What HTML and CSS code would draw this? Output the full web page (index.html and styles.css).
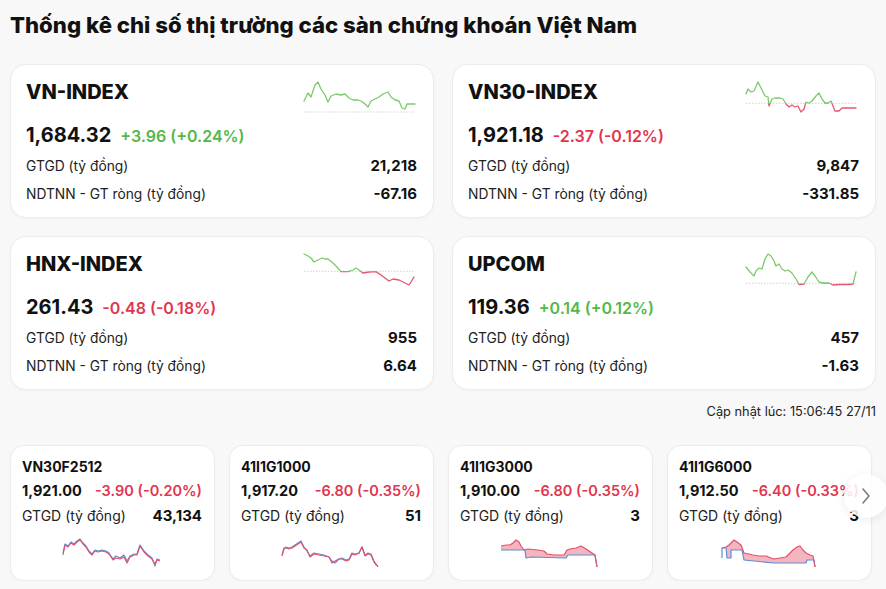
FILE: index.html
```html
<!DOCTYPE html>
<html lang="vi">
<head>
<meta charset="utf-8">
<title>Thống kê chỉ số thị trường</title>
<link rel="stylesheet" href="styles.css">
</head>
<body>
<main class="page">
  <h1 class="title">Thống kê chỉ số thị trường các sàn chứng khoán Việt Nam</h1>

  <section class="index-grid">
    <article class="icard">
      <div class="icard-head">
        <h2 class="iname">VN-INDEX</h2>
        <svg class="spark" viewBox="0 0 115 40" width="115" height="40">
          <line class="base" x1="1" y1="36" x2="112" y2="36"/>
          <polyline class="ln-up" points="1,25 5,17 8,21 12,9 15,6 18,13 22,19 25,26 28,20 33,18 38,19 42,18 46,22 50,24 55,24 58,25 62,28 65,31 68,25 72,23 76,21 80,18 85,16 88,21 92,24 96,25 99,32 102,33 104,28 108,28 112,28"/>
        </svg>
      </div>
      <div class="iprice"><span class="pval">1,684.32</span><span class="chg up">+3.96 (+0.24%)</span></div>
      <div class="stat"><span>GTGD (tỷ đồng)</span><b>21,218</b></div>
      <div class="stat stat2"><span>NDTNN - GT ròng (tỷ đồng)</span><b>-67.16</b></div>
    </article>

    <article class="icard">
      <div class="icard-head">
        <h2 class="iname">VN30-INDEX</h2>
        <svg class="spark" viewBox="0 0 115 40" width="115" height="40">
          <defs>
            <clipPath id="vn30a"><rect x="0" y="0" width="115" height="27.3"/></clipPath>
            <clipPath id="vn30b"><rect x="0" y="27.3" width="115" height="13"/></clipPath>
          </defs>
          <line class="base base-mid" x1="1" y1="27.3" x2="112" y2="27.3"/>
          <polyline class="ln-up" clip-path="url(#vn30a)" points="1,18 3,13 6,16 9,15 13,6 17,14 20,20 23,21 24,30 27,23 30,22 35,22 38,23 41,28 44,31 47,29 50,31 53,30 56,36 59,33 61,26 64,27 67,25 71,20 74,17 77,23 80,27 83,27 86,25 88,30 90,35 94,35 97,32 100,32 104,32 111,32"/>
          <polyline class="ln-down" clip-path="url(#vn30b)" points="1,18 3,13 6,16 9,15 13,6 17,14 20,20 23,21 24,30 27,23 30,22 35,22 38,23 41,28 44,31 47,29 50,31 53,30 56,36 59,33 61,26 64,27 67,25 71,20 74,17 77,23 80,27 83,27 86,25 88,30 90,35 94,35 97,32 100,32 104,32 111,32"/>
        </svg>
      </div>
      <div class="iprice"><span class="pval">1,921.18</span><span class="chg down">-2.37 (-0.12%)</span></div>
      <div class="stat"><span>GTGD (tỷ đồng)</span><b>9,847</b></div>
      <div class="stat stat2"><span>NDTNN - GT ròng (tỷ đồng)</span><b>-331.85</b></div>
    </article>

    <article class="icard">
      <div class="icard-head">
        <h2 class="iname">HNX-INDEX</h2>
        <svg class="spark" viewBox="0 0 115 40" width="115" height="40">
          <defs>
            <clipPath id="hnxa"><rect x="0" y="0" width="115" height="23.3"/></clipPath>
            <clipPath id="hnxb"><rect x="0" y="23.3" width="115" height="17"/></clipPath>
          </defs>
          <line class="base base-mid" x1="1" y1="23.3" x2="112" y2="23.3"/>
          <polyline class="ln-up" clip-path="url(#hnxa)" points="1,6 5,8 8,10 11,14 15,12 19,10 22,11 25,11 30,15 34,19 38,23.6 45,23.6 50,22 53,20 56,22 60,25 66,24 73,23.6 78,27 82,30 86,33 90,31 96,32 100,34 106,37 108,34 111,29"/>
          <polyline class="ln-down" clip-path="url(#hnxb)" points="1,6 5,8 8,10 11,14 15,12 19,10 22,11 25,11 30,15 34,19 38,23.6 45,23.6 50,22 53,20 56,22 60,25 66,24 73,23.6 78,27 82,30 86,33 90,31 96,32 100,34 106,37 108,34 111,29"/>
        </svg>
      </div>
      <div class="iprice"><span class="pval">261.43</span><span class="chg down">-0.48 (-0.18%)</span></div>
      <div class="stat"><span>GTGD (tỷ đồng)</span><b>955</b></div>
      <div class="stat stat2"><span>NDTNN - GT ròng (tỷ đồng)</span><b>6.64</b></div>
    </article>

    <article class="icard">
      <div class="icard-head">
        <h2 class="iname">UPCOM</h2>
        <svg class="spark" viewBox="0 0 115 40" width="115" height="40">
          <defs>
            <clipPath id="upca"><rect x="0" y="0" width="115" height="35.3"/></clipPath>
            <clipPath id="upcb"><rect x="0" y="35.3" width="115" height="5"/></clipPath>
          </defs>
          <line class="base base-mid" x1="1" y1="35.3" x2="112" y2="35.3"/>
          <polyline class="ln-up" clip-path="url(#upca)" points="1,19 5,24 9,28 11,23 14,20 17,21 20,11 23,6 26,8 29,13 31,18 34,16 37,21 40,23 43,22 47,25 51,31 54,36.5 59,36 63,29 67,24 70,28 74,34 78,35 84,35 88,37 95,36.5 104,36.5 108,36 111,24"/>
          <polyline class="ln-down" clip-path="url(#upcb)" points="1,19 5,24 9,28 11,23 14,20 17,21 20,11 23,6 26,8 29,13 31,18 34,16 37,21 40,23 43,22 47,25 51,31 54,36.5 59,36 63,29 67,24 70,28 74,34 78,35 84,35 88,37 95,36.5 104,36.5 108,36 111,24"/>
        </svg>
      </div>
      <div class="iprice"><span class="pval">119.36</span><span class="chg up">+0.14 (+0.12%)</span></div>
      <div class="stat"><span>GTGD (tỷ đồng)</span><b>457</b></div>
      <div class="stat stat2"><span>NDTNN - GT ròng (tỷ đồng)</span><b>-1.63</b></div>
    </article>
  </section>

  <p class="updated">Cập nhật lúc: 15:06:45 27/11</p>

  <section class="fut-wrap">
    <div class="fut-row">
      <article class="fcard">
        <h3 class="fname">VN30F2512</h3>
        <div class="frow fprice"><b>1,921.00</b><span class="chg down">-3.90 (-0.20%)</span></div>
        <div class="frow fstat"><span>GTGD (tỷ đồng)</span><b>43,134</b></div>
        <svg class="fspark" viewBox="0 0 100 32" width="100" height="32">
          <polyline class="f-blue" points="1,16 3,7 6,9 9,5 12,7 15,4 18,2 21,6 24,9 27,14 30,17 33,13 36,14 40,13 44,14 47,16 51,22 54,19 58,21 62,18 65,24 68,19 72,17 75,17 78,8 82,14 86,18 90,21 93,29 95,22 98,23"/>
          <polyline class="f-red" points="1,18 3,8 6,10 9,6 12,8 15,5 18,3 21,7 24,10 27,15 30,18 33,14 36,15 40,14 44,15 47,17 51,23 54,21 58,22 62,20 65,26 68,20 72,18 75,18 78,9 82,15 86,19 90,22 93,27 95,23 98,24"/>
        </svg>
      </article>

      <article class="fcard">
        <h3 class="fname">41I1G1000</h3>
        <div class="frow fprice"><b>1,917.20</b><span class="chg down">-6.80 (-0.35%)</span></div>
        <div class="frow fstat"><span>GTGD (tỷ đồng)</span><b>51</b></div>
        <svg class="fspark" viewBox="0 0 100 32" width="100" height="32">
          <polyline class="f-blue" points="1,18 3,12 5,10 8,11 11,10 14,8 17,6 20,4 23,10 26,14 29,19 33,16 38,17 43,18 48,20 51,24 54,26 58,22 61,21 65,23 68,22 71,16 74,17 78,16 81,10 84,18 87,16 90,17 93,24 95,28 97,29"/>
          <polyline class="f-red" points="1,19 3,11 5,11 8,12 11,11 14,9 17,7 20,5 23,11 26,13 29,20 33,17 38,18 43,19 48,20 51,26 54,24 58,22 61,22 65,24 68,23 71,17 74,18 78,16 81,10 84,19 87,17 90,18 93,25 95,27 97,30"/>
        </svg>
      </article>

      <article class="fcard">
        <h3 class="fname">41I1G3000</h3>
        <div class="frow fprice"><b>1,910.00</b><span class="chg down">-6.80 (-0.35%)</span></div>
        <div class="frow fstat"><span>GTGD (tỷ đồng)</span><b>3</b></div>
        <svg class="fspark" viewBox="0 0 100 32" width="100" height="32">
          <polygon class="f-area" points="1,9 6,8 10,8 13,6 16,3 19,5 21,9 24,13 28,12 38,13 44,14 47,17 54,18 64,18 67,13 70,12 76,11 81,9 86,12 89,14 92,16 95,18 97,30 97,30 95,18 68,18 66,21 31,20 26,21 25,13 1,13"/>
          <polyline class="f-blue" points="1,13 25,13 26,21 31,20 66,21 68,18 95,18 97,30"/>
          <polyline class="f-red" points="1,9 6,8 10,8 13,6 16,3 19,5 21,9 24,13 28,12 38,13 44,14 47,17 54,18 64,18 67,13 70,12 76,11 81,9 86,12 89,14 92,16 95,18 97,30"/>
        </svg>
      </article>

      <article class="fcard">
        <h3 class="fname">41I1G6000</h3>
        <div class="frow fprice"><b>1,912.50</b><span class="chg down">-6.40 (-0.33%)</span></div>
        <div class="frow fstat"><span>GTGD (tỷ đồng)</span><b>3</b></div>
        <svg class="fspark" viewBox="0 0 100 32" width="100" height="32">
          <polygon class="f-area" points="3,11 7,10 10,8 13,5 15,3 18,5 22,8 25,16 30,17 34,18 40,19 47,19 52,21 55,22 61,21 67,20 71,16 74,13 78,10 81,9 84,13 87,16 91,18 94,19 96,30 96,30 95,23 88,23 87,26 55,26 25,23 23,13 12,13 12,21 8,21 7,11"/>
          <polyline class="f-blue" points="3,21 3,11 7,11 8,21 12,21 12,13 23,13 25,23 55,26 87,26 88,23 95,23 96,30"/>
          <polyline class="f-red" points="3,11 7,10 10,8 13,5 15,3 18,5 22,8 25,16 30,17 34,18 40,19 47,19 52,21 55,22 61,21 67,20 71,16 74,13 78,10 81,9 84,13 87,16 91,18 94,19 96,30"/>
        </svg>
      </article>
    </div>
    <button class="next" type="button" aria-label="Tiếp">
      <svg viewBox="0 0 10 18" width="10" height="18"><polyline points="2,2 8,9 2,16"/></svg>
    </button>
  </section>
</main>
</body>
</html>
```

FILE: styles.css
```css
html, body {
  margin: 0;
  overflow: hidden;
}

body {
  background: #f8f8f8;
  font-family: Inter, "Noto Sans", "Liberation Sans", sans-serif;
  color: #1c1c1c;
}

.page {
  padding: 11px 10px 0;
}

.title {
  margin: 0;
  font-size: 22.2px;
  line-height: 28px;
  font-weight: 800;
  color: #111;
}

.index-grid {
  display: grid;
  grid-template-columns: 1fr 1fr;
  gap: 18px;
  margin-top: 25px;
}

.icard {
  box-sizing: border-box;
  height: 154px;
  background: #fff;
  border: 1px solid #ececec;
  border-radius: 16px;
  padding: 15px 16px 0 15px;
  box-shadow: 0 1px 3px rgba(0, 0, 0, 0.03);
}

.icard-head {
  display: flex;
  justify-content: space-between;
  align-items: flex-start;
  height: 36px;
}

.iname {
  margin: 0;
  font-size: 20px;
  line-height: 24px;
  font-weight: 800;
  color: #111;
}

.spark {
  margin-top: -4px;
  margin-right: -1px;
  overflow: visible;
}

.spark polyline {
  fill: none;
  stroke-width: 1.3;
  stroke-linejoin: round;
  stroke-linecap: round;
}

.ln-up { stroke: #7cc96c; }
.ln-down { stroke: #e4566f; }

.base {
  stroke: #b5b5b5;
  stroke-width: 0.6;
  stroke-dasharray: 1.5 1.5;
}

.iprice {
  display: flex;
  align-items: baseline;
  gap: 9px;
  margin-top: 6px;
  line-height: 26px;
}

.pval {
  font-size: 20px;
  font-weight: 700;
  color: #111;
}

.chg {
  font-size: 16px;
  font-weight: 600;
}

.up { color: #53b84a; }
.down { color: #e2354f; }

.stat {
  display: flex;
  justify-content: space-between;
  align-items: center;
  margin-top: 7px;
  font-size: 13.8px;
  line-height: 20px;
  color: #222;
}

.stat2 {
  margin-top: 8px;
}

.stat b {
  font-size: 15px;
  font-weight: 700;
  color: #111;
}

.updated {
  margin: 13px 0 0;
  text-align: right;
  font-size: 12.8px;
  line-height: 18px;
  color: #222;
}

.fut-wrap {
  position: relative;
  margin-top: 24px;
}

.fut-row {
  display: flex;
  gap: 14px;
}

.fcard {
  box-sizing: border-box;
  flex: 0 0 205px;
  height: 136px;
  background: #fff;
  border: 1px solid #ececec;
  border-radius: 14px;
  padding: 11px 12px 0 11px;
  box-shadow: 0 1px 3px rgba(0, 0, 0, 0.03);
}

.fname {
  margin: 0;
  font-size: 14px;
  line-height: 20px;
  font-weight: 700;
  color: #111;
}

.frow {
  display: flex;
  justify-content: space-between;
  align-items: center;
  line-height: 20px;
}

.fprice {
  margin-top: 4px;
  font-size: 14.5px;
}

.fprice b {
  font-weight: 700;
  color: #111;
}

.fprice .chg {
  font-size: 14.5px;
  font-weight: 600;
}

.fstat {
  margin-top: 5px;
  font-size: 14px;
  color: #222;
}

.fstat b {
  font-size: 15px;
  font-weight: 700;
  color: #111;
}

.fspark {
  display: block;
  margin: 11px auto 0;
  overflow: visible;
}

.fspark polyline {
  fill: none;
  stroke-width: 1.2;
  stroke-linejoin: round;
}

.f-blue { stroke: #5b8fd6; }
.f-red { stroke: #e2506c; }

.f-area {
  fill: rgba(232, 90, 110, 0.45);
  stroke: none;
}

.next {
  position: absolute;
  left: 834px;
  top: 29px;
  width: 44px;
  height: 44px;
  padding: 0;
  border: none;
  border-radius: 50%;
  background: rgba(255, 255, 255, 0.85);
  box-shadow: 0 2px 10px rgba(0, 0, 0, 0.08);
  display: flex;
  align-items: center;
  justify-content: center;
}

.next svg polyline {
  fill: none;
  stroke: #777;
  stroke-width: 1.5;
  stroke-linecap: round;
  stroke-linejoin: round;
}
```
